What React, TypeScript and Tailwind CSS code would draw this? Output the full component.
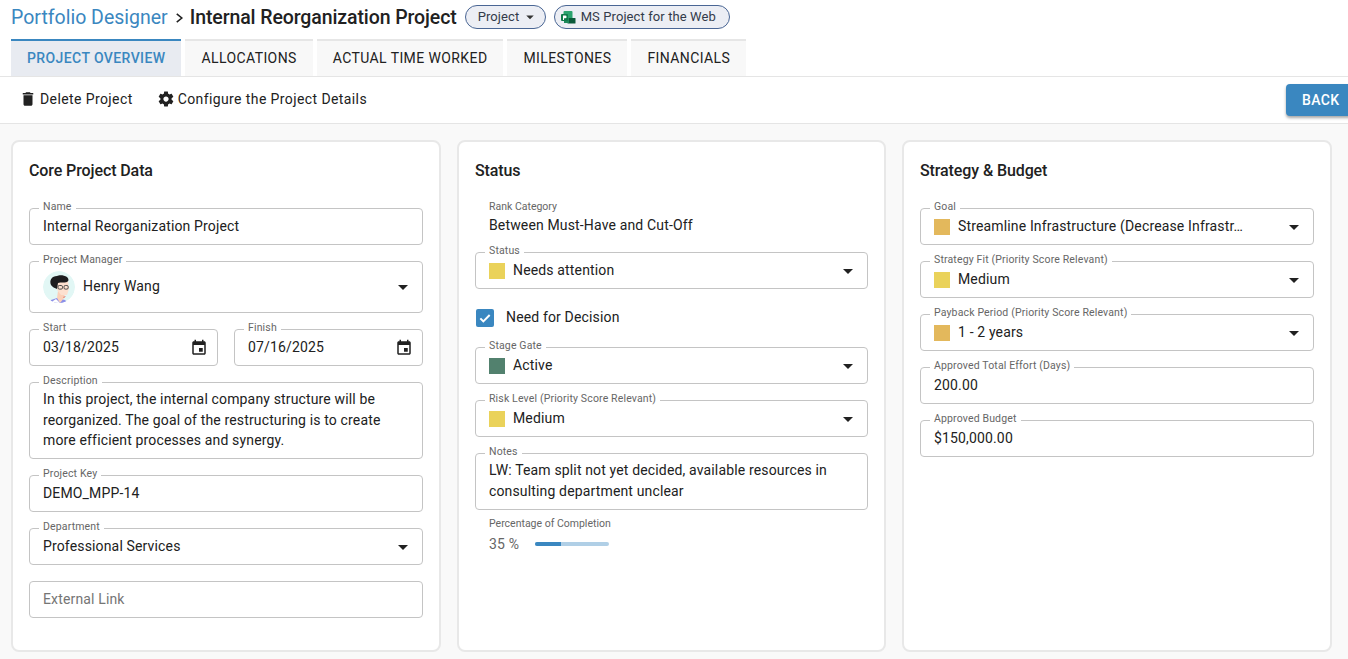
import React from "react";

const Caret = () => (
  <svg viewBox="0 0 24 24" className="w-6 h-6 fill-[#212121] shrink-0"><path d="M7 10l5 5 5-5z" /></svg>
);

const Cal = () => (
  <svg viewBox="0 0 24 24" className="w-[18px] h-[18px] fill-[#212121] shrink-0">
    <path d="M17 12h-5v5h5v-5zM16 1v2H8V1H6v2H5c-1.11 0-1.99.9-1.99 2L3 19c0 1.1.89 2 2 2h14c1.1 0 2-.9 2-2V5c0-1.1-.9-2-2-2h-1V1h-2zm3 18H5V8h14v11z" />
  </svg>
);

function Field({ label, className = "", children }: { label?: string; className?: string; children: React.ReactNode }) {
  return (
    <div className={`relative border border-[#c4c4c4] rounded-[4px] px-[13px] flex items-center text-[14px] text-[#212121] tracking-[0.15px] ${className}`}>
      {label && (
        <span className="absolute left-[9px] top-[-9px] bg-white px-1 text-[10.5px] leading-[14px] text-[#666666] whitespace-nowrap">{label}</span>
      )}
      {children}
    </div>
  );
}

function Select({ label, text, color }: { label: string; text: string; color?: string }) {
  return (
    <Field label={label} className="h-[37px] pr-[7px]">
      {color && <span className="w-4 h-4 mr-2 shrink-0" style={{ backgroundColor: color }} />}
      <span className="flex-1 min-w-0 whitespace-nowrap">{text}</span>
      <Caret />
    </Field>
  );
}

function Card({ title, width, children }: { title: string; width: string; children: React.ReactNode }) {
  return (
    <section className={`${width} shrink-0 bg-white border-2 border-[#e8e8e8] rounded-lg px-4 pt-[19px] h-[512px]`}>
      <h2 className="text-[16px] leading-[20px] font-medium text-[#212121] tracking-[-0.1px] mb-[27px]">{title}</h2>
      {children}
    </section>
  );
}

const tabs = ["ALLOCATIONS", "ACTUAL TIME WORKED", "MILESTONES", "FINANCIALS"];

export default function App() {
  return (
    <div className="h-[659px] overflow-hidden bg-white font-['Roboto',sans-serif] text-[#212121]">
      {/* Title row */}
      <header className="h-[39px] flex items-start pl-[11px] pt-[5px]">
        <h1 className="flex items-center h-6 pt-[2px] text-[19.5px] font-normal whitespace-nowrap">
          <span className="text-[#3a87c0]">Portfolio Designer</span>
          <svg viewBox="0 0 24 24" className="w-[11px] h-[14px] ml-[6px] mr-[5px]" fill="none" stroke="#212121" strokeWidth="3.4"><path d="M6 3l11 9-11 9" /></svg>
          <span className="text-[#212121] font-medium tracking-[-0.1px]">Internal Reorganization Project</span>
        </h1>
        <div className="ml-2 h-6 w-[81px] rounded-full border border-[#4a6694] bg-[#eceef4] flex items-center pl-3 text-[13px] text-[#333b4a] tracking-[0.1px]">
          Project
          <svg viewBox="0 0 24 24" className="w-[18px] h-[18px] ml-[2px] fill-[#333]"><path d="M7 10l5 5 5-5z" /></svg>
        </div>
        <div className="ml-2 h-6 w-[176px] rounded-full border border-[#4a6694] bg-[#eceef4] flex items-center pl-[6px] text-[13px] text-[#333b4a] tracking-[0.1px] whitespace-nowrap">
          <svg viewBox="0 0 15 13" className="w-[15px] h-[13px] mr-[5px] shrink-0">
            <rect x="2.5" y="0" width="9" height="8" rx="1" fill="#2ba36e" />
            <rect x="6.5" y="7" width="8" height="5.5" rx="0.6" fill="#0b5a3a" />
            <rect x="3" y="7" width="5" height="5" fill="#1f8a5b" />
            <rect x="0" y="3" width="7" height="7" rx="1" fill="#0f7a4a" />
            <path d="M2 4.5h2.2a1.3 1.3 0 0 1 0 2.8H3V9H2z" fill="#ffffff" />
          </svg>
          MS Project for the Web
        </div>
      </header>

      {/* Tabs */}
      <nav className="h-[38px] border-b border-[#e5e5e5] flex pl-[11px] gap-1">
        <div className="h-[37px] bg-[#e8ebf1] border-t-[2px] border-[#3a87c0] px-4 flex items-center text-[14px] font-medium tracking-[0.4px] text-[#3a87c0]">
          PROJECT OVERVIEW
        </div>
        {tabs.map((t) => (
          <div key={t} className="h-[37px] bg-[#f8f8f8] border-t-[2px] border-[#e6e6e6] px-4 flex items-center text-[14px] tracking-[0.4px] text-[#212121] whitespace-nowrap">
            {t}
          </div>
        ))}
      </nav>

      {/* Toolbar */}
      <div className="h-[47px] border-b border-[#e5e5e5] flex items-center pl-[19px] pb-[2px] text-[14px] tracking-[0.4px] text-[#212121]">
        <svg viewBox="0 0 24 24" className="w-[18px] h-[18px] mr-[3px] fill-[#212121] shrink-0"><path d="M6 19c0 1.1.9 2 2 2h8c1.1 0 2-.9 2-2V7H6v12zM19 4h-3.5l-1-1h-5l-1 1H5v2h14V4z" /></svg>
        <span>Delete Project</span>
        <svg viewBox="0 0 24 24" className="w-[18px] h-[18px] ml-[24px] mr-[3px] fill-[#212121] shrink-0">
          <path d="M19.43 12.98c.04-.32.07-.64.07-.98s-.03-.66-.07-.98l2.11-1.65c.19-.15.24-.42.12-.64l-2-3.46c-.12-.22-.39-.3-.61-.22l-2.49 1c-.52-.4-1.08-.73-1.69-.98l-.38-2.65C14.46 2.18 14.25 2 14 2h-4c-.25 0-.46.18-.49.42l-.38 2.65c-.61.25-1.17.59-1.69.98l-2.49-1c-.23-.09-.49 0-.61.22l-2 3.46c-.13.22-.07.49.12.64l2.11 1.65c-.04.32-.07.65-.07.98s.03.66.07.98l-2.11 1.65c-.19.15-.24.42-.12.64l2 3.46c.12.22.39.3.61.22l2.49-1c.52.4 1.08.73 1.69.98l.38 2.65c.03.24.24.42.49.42h4c.25 0 .46-.18.49-.42l.38-2.65c.61-.25 1.17-.59 1.69-.98l2.49 1c.23.09.49 0 .61-.22l2-3.46c.12-.22.07-.49-.12-.64l-2.11-1.65zM12 15.5c-1.93 0-3.5-1.57-3.5-3.5s1.57-3.5 3.5-3.5 3.5 1.57 3.5 3.5-1.57 3.5-3.5 3.5z" />
        </svg>
        <span>Configure the Project Details</span>
        <div className="ml-auto mr-[-7px] mt-[2px] h-8 w-[69px] bg-[#3a87c0] rounded-[4px] shadow-[0_2px_3px_rgba(0,0,0,0.35)] flex items-center pl-4 text-[14px] font-medium tracking-[0.4px] text-white">
          BACK
        </div>
      </div>

      {/* Content */}
      <main className="h-[535px] bg-[#f9f9f9] flex gap-4 pl-[11px] pt-4">
        <Card title="Core Project Data" width="w-[430px]">
          <div className="flex flex-col gap-4">
            <Field label="Name" className="h-[37px]">Internal Reorganization Project</Field>
            <Field label="Project Manager" className="h-[52px] pr-[7px]">
              <svg viewBox="0 0 32 32" className="w-8 h-8 mr-2 shrink-0 rounded-full">
                <circle cx="16" cy="16" r="16" fill="#e2f7f5" />
                <path d="M6 32l2-3 6-2 8 2 3 3z" fill="#8b8fe8" />
                <path d="M7 32l6-4 4 4z" fill="#ffffff" />
                <path d="M15 20l-1 7 3 5 4-5 1-5z" fill="#fbd0b8" />
                <path d="M14 11l11-1 1 8-2 6h-6l-4-5z" fill="#fde0cf" />
                <path d="M8 14c-2-5 1-9 6-9 2-1 7-1 10 1 2 2 2 4 0 5-3 1-6 0-9 1l-1 6c-2-1-5-2-6-4z" fill="#1d1d1f" />
                <rect x="15" y="14.5" width="4.5" height="3.6" rx="1.3" fill="none" stroke="#4a4a4a" strokeWidth="1" />
                <rect x="21" y="14.5" width="4.2" height="3.6" rx="1.3" fill="none" stroke="#4a4a4a" strokeWidth="1" />
                <path d="M20 26l3-1-2 2z" fill="#e2685c" />
              </svg>
              <span className="flex-1 -mt-[1px]">Henry Wang</span>
              <Caret />
            </Field>
            <div className="flex gap-4">
              <Field label="Start" className="flex-1 h-[37px] pr-[9px] justify-between">03/18/2025<Cal /></Field>
              <Field label="Finish" className="flex-1 h-[37px] pr-[9px] justify-between">07/16/2025<Cal /></Field>
            </div>
            <Field label="Description" className="h-[77px] items-start pt-[6px] leading-[20.6px]">
              <p>In this project, the internal company structure will be reorganized. The goal of the restructuring is to create more efficient processes and synergy.</p>
            </Field>
            <Field label="Project Key" className="h-[37px]">DEMO_MPP-14</Field>
            <Select label="Department" text="Professional Services" />
            <Field className="h-[37px] text-[#757575]">External Link</Field>
          </div>
        </Card>

        <Card title="Status" width="w-[429px]">
          <div className="flex flex-col">
            <div className="px-[14px] -mt-[8px] h-[41px]">
              <div className="text-[10.5px] leading-[14px] text-[#666666]">Rank Category</div>
              <div className="text-[14px] leading-[20px] mt-[1px] tracking-[0.15px]">Between Must-Have and Cut-Off</div>
            </div>
            <div className="mt-[11px]"><Select label="Status" text="Needs attention" color="#ead25a" /></div>
            <div className="h-[58px] flex items-center pb-[1px] text-[14px] tracking-[0.15px]">
              <span className="w-[18px] h-[18px] ml-[1px] mr-[12px] mt-[1px] rounded-[2px] bg-[#3a87c0] flex items-center justify-center">
                <svg viewBox="0 0 24 24" className="w-4 h-4" fill="none" stroke="#fff" strokeWidth="3"><path d="M5 12.5l4.5 4.5L19 7.5" /></svg>
              </span>
              Need for Decision
            </div>
            <div className="flex flex-col gap-4">
              <Select label="Stage Gate" text="Active" color="#52816e" />
              <Select label="Risk Level (Priority Score Relevant)" text="Medium" color="#ead25a" />
              <Field label="Notes" className="h-[57px] items-start pt-[6px] leading-[21px]">
                <p>LW: Team split not yet decided, available resources in consulting department unclear</p>
              </Field>
            </div>
            <div className="px-[14px] mt-[7px]">
              <div className="text-[10.5px] leading-[14px] text-[#666666]">Percentage of Completion</div>
              <div className="flex items-center mt-[3px]">
                <span className="text-[14px] leading-[20px] text-[#666666] w-[46px] tracking-[0.15px]">35 %</span>
                <div className="w-[74px] h-1 rounded-sm bg-[#b0cfe6] overflow-hidden">
                  <div className="h-full bg-[#3a87c0]" style={{ width: "35%" }} />
                </div>
              </div>
            </div>
          </div>
        </Card>

        <Card title="Strategy & Budget" width="w-[430px]">
          <div className="flex flex-col gap-4">
            <Select label="Goal" text="Streamline Infrastructure (Decrease Infrastr…" color="#e3b85c" />
            <Select label="Strategy Fit (Priority Score Relevant)" text="Medium" color="#ead25a" />
            <Select label="Payback Period (Priority Score Relevant)" text="1 - 2 years" color="#e3b85c" />
            <Field label="Approved Total Effort (Days)" className="h-[37px]">200.00</Field>
            <Field label="Approved Budget" className="h-[37px]">$150,000.00</Field>
          </div>
        </Card>
      </main>
    </div>
  );
}
